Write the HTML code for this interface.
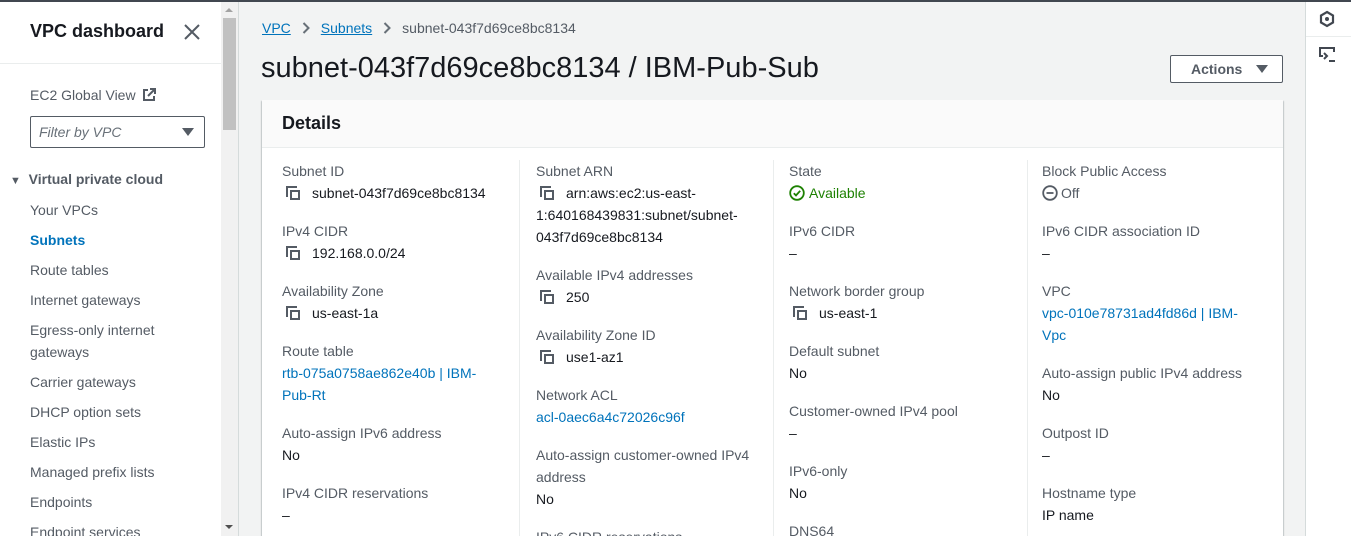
<!DOCTYPE html>
<html style="overflow:hidden;width:1351px;height:536px"><head><meta charset="utf-8"><style>
*{box-sizing:border-box;margin:0;padding:0}
body{width:1351px;height:536px;overflow:hidden;font-family:"Liberation Sans",Arial,sans-serif;font-size:14px;color:#16191f;background:#f2f3f3;position:relative}
.abs{position:absolute;white-space:nowrap;line-height:22px}
.lab{color:#545b64}
.lnk{color:#0073bb}
.cp{display:inline-block;width:14px;height:14px;position:relative;vertical-align:-2px;margin-right:12px;margin-left:4px}
.cp:before{content:"";position:absolute;left:0;top:0;width:9px;height:9px;border-left:2px solid #545b64;border-top:2px solid #545b64}
.cp:after{content:"";position:absolute;left:4px;top:4px;width:10px;height:10px;border:2px solid #545b64;box-sizing:border-box}
.side a{position:absolute;left:30px;color:#545b64;line-height:22px}
.chev{display:inline-block;vertical-align:-1px;margin:0 11px}
</style></head><body>
<div style="position:absolute;left:0;top:0;width:1351px;height:2px;background:#414750"></div>
<div class="side" style="position:absolute;left:0;top:2px;width:221px;height:534px;background:#fff">
<div class="abs" style="left:30px;top:18px;font-size:18px;font-weight:bold">VPC dashboard</div>
<svg style="position:absolute;left:184px;top:22px" width="16" height="16" viewBox="0 0 16 16"><path d="M1 1 L15 15 M15 1 L1 15" stroke="#545b64" stroke-width="2"/></svg>
<div style="position:absolute;left:0;top:61px;width:221px;height:1px;background:#eaeded"></div>
<div class="abs" style="left:30px;top:82px;color:#545b64">EC2 Global View <svg width="14" height="14" viewBox="0 0 14 14" style="vertical-align:-2px;margin-left:3px"><path d="M6 2 H2 V12 H12 V8" fill="none" stroke="#545b64" stroke-width="2"/><path d="M8 1 H13 V6 M13 1 L6 8" fill="none" stroke="#545b64" stroke-width="2"/></svg></div>
<div style="position:absolute;left:30px;top:114px;width:175px;height:32px;border:1px solid #545b64;border-radius:2px"><span class="abs" style="left:8px;top:4px;font-style:italic;color:#687078">Filter by VPC</span><span style="position:absolute;right:10px;top:11px;border-left:6px solid transparent;border-right:6px solid transparent;border-top:8px solid #545b64"></span></div>
<div class="abs" style="left:10px;top:166px;font-weight:bold;color:#545b64"><span style="font-size:11px">▼</span>&nbsp; Virtual private cloud</div>
<a style="top:197px">Your VPCs</a>
<a style="top:227px;color:#0073bb;font-weight:bold">Subnets</a>
<a style="top:257px">Route tables</a>
<a style="top:287px">Internet gateways</a>
<a style="top:317px">Egress-only internet</a>
<a style="top:339px">gateways</a>
<a style="top:369px">Carrier gateways</a>
<a style="top:399px">DHCP option sets</a>
<a style="top:429px">Elastic IPs</a>
<a style="top:459px">Managed prefix lists</a>
<a style="top:489px">Endpoints</a>
<a style="top:519px">Endpoint services</a>
</div>
<div style="position:absolute;left:221px;top:2px;width:17px;height:534px;background:#f1f1f1"></div>
<div style="position:absolute;left:223px;top:18px;width:13px;height:112px;background:#c1c1c1"></div>
<div style="position:absolute;left:225px;top:8px;border-left:4px solid transparent;border-right:4px solid transparent;border-bottom:4px solid #a3a3a3"></div>
<div style="position:absolute;left:225px;top:525px;border-left:4px solid transparent;border-right:4px solid transparent;border-top:4px solid #505050"></div>
<div style="position:absolute;left:238px;top:2px;width:1px;height:534px;background:#d5dbdb"></div>
<div style="position:absolute;left:1305px;top:2px;width:46px;height:534px;background:#fff;border-left:1px solid #d5dbdb"></div>
<div style="position:absolute;left:1306px;top:36px;width:45px;height:1px;background:#eaeded"></div>
<svg style="position:absolute;left:1318px;top:10px" width="18" height="18" viewBox="0 0 18 18"><path d="M9 2 L15 5.5 V12.5 L9 16 L3 12.5 V5.5 Z" fill="none" stroke="#414750" stroke-width="2.2"/><circle cx="9" cy="9" r="2" fill="#414750"/></svg>
<svg style="position:absolute;left:1318px;top:46px" width="20" height="18" viewBox="0 0 20 18"><path d="M5 10 H2 V2 H16 V6" fill="none" stroke="#414750" stroke-width="2"/><path d="M6 7 L9 10 L6 13" fill="none" stroke="#414750" stroke-width="2"/><path d="M11 15 H17" stroke="#414750" stroke-width="2"/></svg>
<div class="abs" style="left:262px;top:17px"><span class="lnk" style="text-decoration:underline">VPC</span><svg class="chev" width="8" height="12" viewBox="0 0 8 12"><path d="M1.5 1 L6.5 6 L1.5 11" fill="none" stroke="#687078" stroke-width="2"/></svg><span class="lnk" style="text-decoration:underline">Subnets</span><svg class="chev" width="8" height="12" viewBox="0 0 8 12"><path d="M1.5 1 L6.5 6 L1.5 11" fill="none" stroke="#687078" stroke-width="2"/></svg><span style="color:#545b64">subnet-043f7d69ce8bc8134</span></div>
<div class="abs" style="left:261px;top:51px;font-size:29px;line-height:34px">subnet-043f7d69ce8bc8134 / IBM-Pub-Sub</div>
<div style="position:absolute;left:1170px;top:55px;width:113px;height:28px;border:1px solid #545b64;border-radius:2px;background:#fff;font-weight:bold;color:#545b64;line-height:26px;padding-left:20px">Actions <span style="display:inline-block;margin-left:10px;border-left:6px solid transparent;border-right:6px solid transparent;border-top:8px solid #545b64;vertical-align:1px"></span></div>
<div style="position:absolute;left:262px;top:100px;width:1021px;height:440px;background:#fff;box-shadow:0 1px 1px rgba(0,28,36,.3),1px 1px 1px rgba(0,28,36,.15),-1px 1px 1px rgba(0,28,36,.15)">
<div style="height:48px;background:#fafafa;border-bottom:1px solid #eaeded;font-size:18px;font-weight:bold;line-height:46px;padding-left:20px">Details</div>
<div style="position:absolute;left:257px;top:60px;width:1px;height:380px;background:#eaeded"></div>
<div style="position:absolute;left:511px;top:60px;width:1px;height:380px;background:#eaeded"></div>
<div style="position:absolute;left:765px;top:60px;width:1px;height:380px;background:#eaeded"></div>
</div>
<div class="abs lab" style="left:282px;top:160px">Subnet ID</div>
<div class="abs" style="left:282px;top:182px"><i class="cp"></i>subnet-043f7d69ce8bc8134</div>
<div class="abs lab" style="left:282px;top:220px">IPv4 CIDR</div>
<div class="abs" style="left:282px;top:242px"><i class="cp"></i>192.168.0.0/24</div>
<div class="abs lab" style="left:282px;top:280px">Availability Zone</div>
<div class="abs" style="left:282px;top:302px"><i class="cp"></i>us-east-1a</div>
<div class="abs lab" style="left:282px;top:340px">Route table</div>
<div class="abs lnk" style="left:282px;top:362px">rtb-075a0758ae862e40b | IBM-<br>Pub-Rt</div>
<div class="abs lab" style="left:282px;top:422px">Auto-assign IPv6 address</div>
<div class="abs" style="left:282px;top:444px">No</div>
<div class="abs lab" style="left:282px;top:482px">IPv4 CIDR reservations</div>
<div class="abs" style="left:282px;top:504px">–</div>
<div class="abs lab" style="left:536px;top:160px">Subnet ARN</div>
<div class="abs" style="left:536px;top:182px"><i class="cp"></i>arn:aws:ec2:us-east-<br>1:640168439831:subnet/subnet-<br>043f7d69ce8bc8134</div>
<div class="abs lab" style="left:536px;top:264px">Available IPv4 addresses</div>
<div class="abs" style="left:536px;top:286px"><i class="cp"></i>250</div>
<div class="abs lab" style="left:536px;top:324px">Availability Zone ID</div>
<div class="abs" style="left:536px;top:346px"><i class="cp"></i>use1-az1</div>
<div class="abs lab" style="left:536px;top:384px">Network ACL</div>
<div class="abs lnk" style="left:536px;top:406px">acl-0aec6a4c72026c96f</div>
<div class="abs lab" style="left:536px;top:444px">Auto-assign customer-owned IPv4<br>address</div>
<div class="abs" style="left:536px;top:488px">No</div>
<div class="abs lab" style="left:536px;top:526px">IPv6 CIDR reservations</div>
<div class="abs lab" style="left:789px;top:160px">State</div>
<div class="abs" style="left:789px;top:182px;color:#1d8102"><svg width="16" height="16" viewBox="0 0 16 16" style="vertical-align:-3px;margin-right:4px"><circle cx="8" cy="8" r="6.8" fill="none" stroke="#1d8102" stroke-width="1.8"/><path d="M4.8 8.2 L7 10.4 L11.2 5.8" fill="none" stroke="#1d8102" stroke-width="1.8"/></svg>Available</div>
<div class="abs lab" style="left:789px;top:220px">IPv6 CIDR</div>
<div class="abs" style="left:789px;top:242px">–</div>
<div class="abs lab" style="left:789px;top:280px">Network border group</div>
<div class="abs" style="left:789px;top:302px"><i class="cp"></i>us-east-1</div>
<div class="abs lab" style="left:789px;top:340px">Default subnet</div>
<div class="abs" style="left:789px;top:362px">No</div>
<div class="abs lab" style="left:789px;top:400px">Customer-owned IPv4 pool</div>
<div class="abs" style="left:789px;top:422px">–</div>
<div class="abs lab" style="left:789px;top:460px">IPv6-only</div>
<div class="abs" style="left:789px;top:482px">No</div>
<div class="abs lab" style="left:789px;top:520px">DNS64</div>
<div class="abs lab" style="left:1042px;top:160px">Block Public Access</div>
<div class="abs" style="left:1042px;top:182px;color:#545b64"><svg width="16" height="16" viewBox="0 0 16 16" style="vertical-align:-3px;margin-right:3px"><circle cx="8" cy="8" r="6.8" fill="none" stroke="#545b64" stroke-width="1.8"/><path d="M4.5 8 H11.5" stroke="#545b64" stroke-width="1.8"/></svg>Off</div>
<div class="abs lab" style="left:1042px;top:220px">IPv6 CIDR association ID</div>
<div class="abs" style="left:1042px;top:242px">–</div>
<div class="abs lab" style="left:1042px;top:280px">VPC</div>
<div class="abs lnk" style="left:1042px;top:302px">vpc-010e78731ad4fd86d | IBM-<br>Vpc</div>
<div class="abs lab" style="left:1042px;top:362px">Auto-assign public IPv4 address</div>
<div class="abs" style="left:1042px;top:384px">No</div>
<div class="abs lab" style="left:1042px;top:422px">Outpost ID</div>
<div class="abs" style="left:1042px;top:444px">–</div>
<div class="abs lab" style="left:1042px;top:482px">Hostname type</div>
<div class="abs" style="left:1042px;top:504px">IP name</div>
</body></html>
